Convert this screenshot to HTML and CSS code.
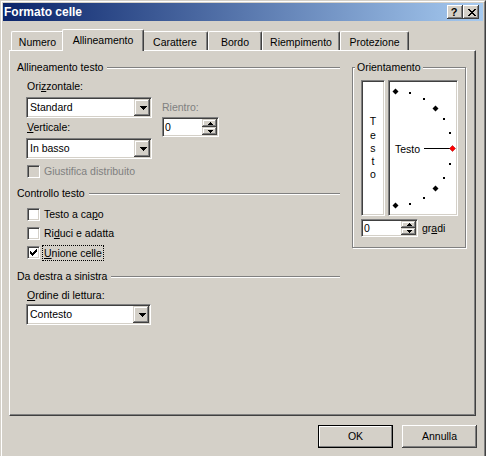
FILE: index.html
```html
<!DOCTYPE html>
<html lang="it">
<head>
<meta charset="utf-8">
<title>Formato celle</title>
<link rel="stylesheet" href="styles.css">
</head>
<body>
<div class="win">
  <div class="win-in">
    <div class="titlebar">
      <span class="title">Formato celle</span>
      <div class="capbtns">
        <span class="capbtn help">?</span>
        <span class="capbtn close"><svg width="8" height="7" viewBox="0 0 8 7"><path d="M0 0h2v1H0z M6 0h2v1H6z M1 1h2v1H1z M5 1h2v1H5z M2 2h4v1H2z M3 3h2v1H3z M2 4h4v1H2z M1 5h2v1H1z M5 5h2v1H5z M0 6h2v1H0z M6 6h2v1H6z" fill="#000"/></svg></span>
      </div>
    </div>
    <div class="content">
      <div class="tabs">
        <div class="tab tab-numero">Numero</div>
        <div class="tab tab-allin active">Allineamento</div>
        <div class="tab tab-car">Carattere</div>
        <div class="tab tab-bordo">Bordo</div>
        <div class="tab tab-riemp">Riempimento</div>
        <div class="tab tab-prot">Protezione</div>
      </div>
      <div class="panel">
        <div class="leftcol">
          <div class="ghead">Allineamento testo</div>
          <div class="sect1">
            <div class="colA">
              <div class="lbl lbl-oriz">Ori<u>z</u>zontale:</div>
              <div class="select sel-std">
                <span class="sel-text">Standard</span>
                <span class="dd"><svg width="7" height="4" viewBox="0 0 7 4"><path d="M0 0h7v1H0z M1 1h5v1H1z M2 2h3v1H2z M3 3h1v1H3z" fill="#000"/></svg></span>
              </div>
              <div class="lbl lbl-vert"><u>V</u>erticale:</div>
              <div class="select sel-basso">
                <span class="sel-text">In basso</span>
                <span class="dd"><svg width="7" height="4" viewBox="0 0 7 4"><path d="M0 0h7v1H0z M1 1h5v1H1z M2 2h3v1H2z M3 3h1v1H3z" fill="#000"/></svg></span>
              </div>
              <div class="cbrow cb-giust disabled">
                <span class="cb cb-dis"></span>
                <span class="cbtext">Giustifica distribuito</span>
              </div>
            </div>
            <div class="colB">
              <div class="lbl lbl-rientro disabled">Rientro:</div>
              <div class="spin spin-rientro">
                <span class="spin-text">0</span>
                <span class="spinbtns">
                  <span class="sb"><svg width="5" height="3" viewBox="0 0 5 3"><path d="M2 0h1v1H2z M1 1h3v1H1z M0 2h5v1H0z" fill="#000"/></svg></span>
                  <span class="sb"><svg width="5" height="3" viewBox="0 0 5 3"><path d="M0 0h5v1H0z M1 1h3v1H1z M2 2h1v1H2z" fill="#000"/></svg></span>
                </span>
              </div>
            </div>
          </div>

          <div class="ghead gh2">Controllo testo</div>
          <div class="indent">
            <div class="cbrow cb1">
              <span class="cb"></span>
              <span class="cbtext">Testo a ca<u>p</u>o</span>
            </div>
            <div class="cbrow cb2">
              <span class="cb"></span>
              <span class="cbtext">Ri<u>d</u>uci e adatta</span>
            </div>
            <div class="cbrow cb3">
              <span class="cb"><svg width="7" height="7" viewBox="0 0 7 7"><path d="M0 2h1v3H0z M1 3h1v3H1z M2 4h1v3H2z M3 3h1v3H3z M4 2h1v3H4z M5 1h1v3H5z M6 0h1v3H6z" fill="#000"/></svg></span>
              <span class="cbtext focus"><u>U</u>nione celle</span>
            </div>
          </div>

          <div class="ghead gh3">Da destra a sinistra</div>
          <div class="indent">
            <div class="lbl lbl-ordine"><u>O</u>rdine di lettura:</div>
            <div class="select sel-ctx">
              <span class="sel-text">Contesto</span>
              <span class="dd"><svg width="7" height="4" viewBox="0 0 7 4"><path d="M0 0h7v1H0z M1 1h5v1H1z M2 2h3v1H2z M3 3h1v1H3z" fill="#000"/></svg></span>
            </div>
          </div>
        </div>

        <fieldset class="orient">
          <legend>Orientamento</legend>
          <div class="orow">
            <div class="vbox"><div class="vtext">T<br>e<br>s<br>t<br>o</div></div>
            <div class="dial">
              <svg class="dialsvg" width="66" height="132" viewBox="0 0 66 132">
                <g fill="#000">
                  <polygon points="5.5,6.5 8.5,9.5 5.5,12.5 2.5,9.5"/>
                  <polygon points="45.5,23.5 48.5,26.5 45.5,29.5 42.5,26.5"/>
                  <polygon points="45.5,103.5 48.5,106.5 45.5,109.5 42.5,106.5"/>
                  <polygon points="5.5,120.5 8.5,123.5 5.5,126.5 2.5,123.5"/>
                  <rect x="19" y="10" width="2" height="2"/>
                  <rect x="33" y="16" width="2" height="2"/>
                  <rect x="53" y="36" width="2" height="2"/>
                  <rect x="59" y="50" width="2" height="2"/>
                  <rect x="59" y="81" width="2" height="2"/>
                  <rect x="53" y="95" width="2" height="2"/>
                  <rect x="33" y="115" width="2" height="2"/>
                  <rect x="19" y="121" width="2" height="2"/>
                </g>
                <text class="dialtext" x="5" y="71">Testo</text>
                <line x1="34" y1="66.5" x2="60" y2="66.5" stroke="#000" stroke-width="1"/>
                <polygon points="62.5,63.5 65.5,66.5 62.5,69.5 59.5,66.5" fill="#ff0000" stroke="#a00000" stroke-width="0.5"/>
              </svg>
            </div>
          </div>
          <div class="ospin-row">
            <div class="spin spin-orient">
              <span class="spin-text">0</span>
              <span class="spinbtns">
                <span class="sb"><svg width="5" height="3" viewBox="0 0 5 3"><path d="M2 0h1v1H2z M1 1h3v1H1z M0 2h5v1H0z" fill="#000"/></svg></span>
                <span class="sb"><svg width="5" height="3" viewBox="0 0 5 3"><path d="M0 0h5v1H0z M1 1h3v1H1z M2 2h1v1H2z" fill="#000"/></svg></span>
              </span>
            </div>
            <span class="gradi">gr<u>a</u>di</span>
          </div>
        </fieldset>
      </div>

      <div class="btnrow">
        <div class="btn btn-ok">OK</div>
        <div class="btn">Annulla</div>
      </div>
    </div>
  </div>
</div>
</body>
</html>
```

FILE: styles.css
```css
html, body {
  margin: 0;
  padding: 0;
  overflow: hidden;
  background: #d4d0c8;
}
body {
  font-family: "Liberation Sans", Arial, sans-serif;
  font-size: 10.5px;
  line-height: 13px;
  color: #000;
}
u { text-decoration: underline; text-underline-offset: 1px; }

.win {
  width: 486px;
  height: 462px;
  box-sizing: border-box;
  border: 1px solid;
  border-color: #d4d0c8 #404040 #404040 #d4d0c8;
}
.win-in {
  height: 100%;
  box-sizing: border-box;
  border: 1px solid;
  border-color: #ffffff #808080 #808080 #ffffff;
  padding: 1px;
  background: #d4d0c8;
}

/* title bar */
.titlebar {
  height: 18px;
  display: flex;
  align-items: center;
  background: linear-gradient(to right, #0a246a, #a6caf0);
  padding: 0 4px 0 1px;
}
.title {
  color: #fff;
  font-weight: bold;
  font-size: 12px;
  line-height: 18px;
}
.capbtns { margin-left: auto; display: flex; }
.capbtn {
  width: 16px;
  height: 14px;
  box-sizing: border-box;
  background: #d4d0c8;
  box-shadow: inset -1px -1px #404040, inset 1px 1px #ffffff, inset -2px -2px #808080, inset 2px 2px #d4d0c8;
  display: flex;
  align-items: center;
  justify-content: center;
}
.help {
  font-weight: bold;
  font-size: 11px;
  line-height: 12px;
  padding-right: 2px;
}
.close { padding-left: 1px; }
.close svg { display: block; }

/* content */
.content { padding: 8px 6px 0 6px; }

.tabs {
  display: flex;
  align-items: flex-end;
  height: 21px;
  padding-left: 2px;
  position: relative;
  z-index: 1;
}
.tab {
  height: 19px;
  box-sizing: border-box;
  border-top: 1px solid #ffffff;
  border-left: 1px solid #ffffff;
  border-right: 1px solid #404040;
  border-radius: 2px 2px 0 0;
  box-shadow: inset -1px 0 #808080;
  text-align: center;
  padding-top: 4px;
  background: #d4d0c8;
  white-space: nowrap;
}
.tab.active {
  height: 22px;
  margin: 0 -2px -1px;
  position: relative;
  z-index: 2;
}
.tab-numero { width: 53px; }
.tab-allin { width: 82px; }
.tab-car { width: 66px; }
.tab-bordo { width: 54px; }
.tab-riemp { width: 78px; }
.tab-prot { width: 69px; }

.panel {
  width: 467px;
  height: 366px;
  box-sizing: border-box;
  border: 1px solid;
  border-color: #ffffff #404040 #404040 #ffffff;
  box-shadow: inset -1px -1px #808080;
  display: flex;
  align-items: flex-start;
  padding: 10px 0 0 7px;
}

.leftcol { width: 323px; }

.ghead {
  display: flex;
  height: 13px;
  white-space: nowrap;
}
.ghead::after {
  content: "";
  flex: 1;
  height: 0;
  margin: 6px 0 0 4px;
  border-top: 1px solid #808080;
  border-bottom: 1px solid #ffffff;
}
.gh2 { margin-top: 9px; }
.gh3 { margin-top: 11px; }

.sect1 { display: flex; padding-left: 9px; }
.colA { width: 126px; }
.colB { margin-left: 10px; }
.indent { padding-left: 9px; }

.lbl { height: 13px; padding-left: 1px; white-space: nowrap; }
.lbl-oriz { margin-top: 6px; }
.lbl-vert { margin-top: 3px; }
.lbl-rientro { margin-top: 27px; padding-left: 0; }
.lbl-ordine { margin-top: 6px; }
.disabled { color: #808080; }

.select, .spin {
  display: flex;
  box-sizing: border-box;
  border: 1px solid;
  border-color: #808080 #ffffff #ffffff #808080;
  box-shadow: inset 1px 1px #404040, inset -1px -1px #d4d0c8;
  background: #ffffff;
  padding: 1px;
}
.select { height: 21px; width: 126px; }
.sel-std { margin-top: 4px; }
.sel-basso { margin-top: 4px; }
.sel-ctx { margin-top: 2px; width: 125px; }
.sel-text {
  flex: 1;
  line-height: 17px;
  padding-left: 2px;
  white-space: nowrap;
}
.dd, .sb {
  background: #d4d0c8;
  box-shadow: inset -1px -1px #404040, inset 1px 1px #d4d0c8, inset -2px -2px #808080, inset 2px 2px #ffffff;
  display: flex;
  align-items: center;
  justify-content: center;
}
.dd {
  width: 16px;
  height: 17px;
  box-sizing: border-box;
  padding-left: 2px;
}
.dd svg, .sb svg { display: block; }

.spin-rientro { margin-top: 3px; width: 57px; height: 20px; }
.spin-orient { width: 57px; height: 18px; }
.spin-text { flex: 1; line-height: 16px; padding-left: 1px; }
.spin-orient .spin-text { line-height: 14px; }
.spinbtns { display: flex; flex-direction: column; width: 15px; }
.sb { flex: 1; padding-left: 1px; }

.cbrow {
  display: flex;
  align-items: center;
  height: 13px;
  padding-left: 1px;
  white-space: nowrap;
}
.cb-giust { margin-top: 6px; }
.cb1 { margin-top: 8px; }
.cb2, .cb3 { margin-top: 6px; }
.cb {
  width: 13px;
  height: 13px;
  box-sizing: border-box;
  border: 1px solid;
  border-color: #808080 #ffffff #ffffff #808080;
  box-shadow: inset 1px 1px #404040, inset -1px -1px #d4d0c8;
  background: #ffffff;
  display: flex;
  align-items: center;
  justify-content: center;
  flex: none;
}
.cb svg { display: block; }
.cb-dis { background: #d4d0c8; }
.cbtext { margin-left: 4px; }
.focus {
  margin-left: 2px;
  border: 1px dotted #000;
  padding: 1px 1px 0;
  line-height: 13px;
}

/* orientation group */
.orient {
  margin: 0 0 0 12px;
  width: 114px;
  min-width: 0;
  box-sizing: border-box;
  border: 1px solid #808080;
  box-shadow: 1px 1px 0 #ffffff, inset 1px 1px 0 #ffffff;
  padding: 6px 0 10px 8px;
}
.orient legend {
  margin-left: -6px;
  padding: 0 2px;
  line-height: 13px;
  background: #d4d0c8;
}
.orow { display: flex; gap: 3px; }
.vbox, .dial {
  height: 136px;
  box-sizing: border-box;
  border: 1px solid;
  border-color: #808080 #ffffff #ffffff #808080;
  box-shadow: inset 1px 1px #404040, inset -1px -1px #d4d0c8;
  background: #ffffff;
  padding: 1px;
}
.vbox {
  width: 24px;
  display: flex;
  align-items: center;
  justify-content: center;
}
.vtext {
  text-align: center;
  line-height: 13.3px;
  padding-top: 1px;
}
.dial { width: 70px; }
.dialsvg { display: block; }
.dialtext {
  font-family: "Liberation Sans", Arial, sans-serif;
  font-size: 10.5px;
  fill: #000;
}
.ospin-row {
  display: flex;
  align-items: center;
  margin-top: 3px;
}
.gradi { margin-left: 4px; }

/* buttons */
.btnrow {
  display: flex;
  justify-content: flex-end;
  gap: 9px;
  margin-top: 9px;
}
.btn {
  width: 75px;
  height: 23px;
  box-sizing: border-box;
  display: flex;
  align-items: center;
  justify-content: center;
  background: #d4d0c8;
  box-shadow: inset -1px -1px #404040, inset 1px 1px #ffffff, inset -2px -2px #808080, inset 2px 2px #d4d0c8;
}
.btn-ok {
  border: 1px solid #000;
  box-shadow: inset -1px -1px #808080, inset 1px 1px #ffffff;
}
```
